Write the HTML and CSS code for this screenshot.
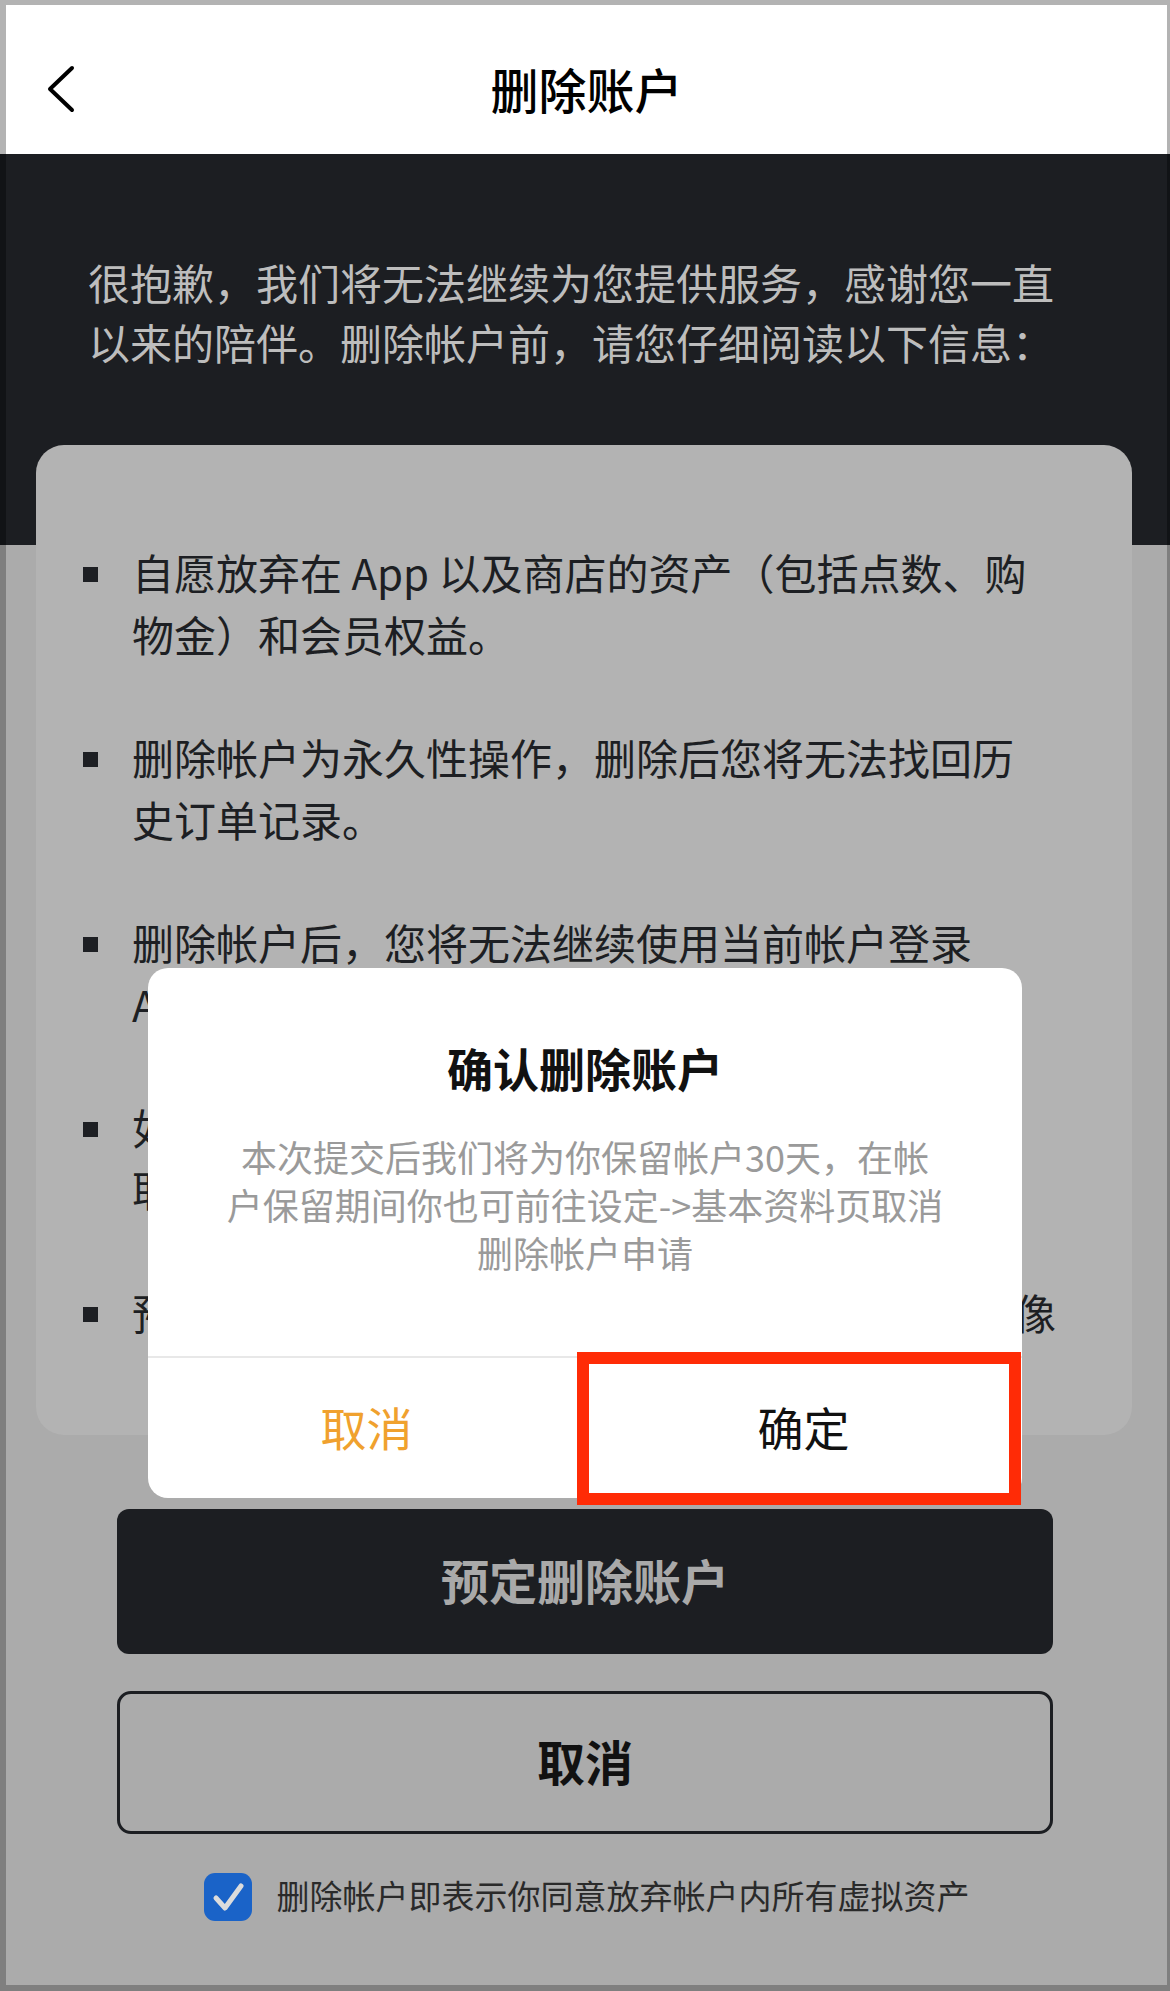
FILE: index.html
```html
<!DOCTYPE html>
<html lang="zh-CN">
<head>
    <meta charset="UTF-8">
    <meta name="viewport" content="width=device-width, initial-scale=1.0">
    <title>删除账户</title>
    <link rel="stylesheet" href="styles.css">
</head>
<body>
    <div class="screen">

        <!-- Top bar -->
        <header class="topbar">
            <svg class="back-icon" width="28" height="48" viewBox="0 0 28 48">
                <path d="M25 3 L3 24 L25 45" fill="none" stroke="#000" stroke-width="4" stroke-linecap="round" stroke-linejoin="round"/>
            </svg>
            <h1>删除账户</h1>
            <span></span>
        </header>

        <!-- Intro -->
        <section class="hero">
            <p class="intro">很抱歉，我们将无法继续为您提供服务，感谢您一直<br>以来的陪伴。删除帐户前，请您仔细阅读以下信息：</p>
        </section>

        <main class="lower">
            <!-- Notice list -->
            <ul class="notice-card">
                <li><span class="dot"></span><p>自愿放弃在 App 以及商店的资产（包括点数、购<br>物金）和会员权益。</p></li>
                <li><span class="dot"></span><p>删除帐户为永久性操作，删除后您将无法找回历<br>史订单记录。</p></li>
                <li><span class="dot"></span><p>删除帐户后，您将无法继续使用当前帐户登录<br>App 以及商店。</p></li>
                <li><span class="dot"></span><p>如需再次使用，请重新注册帐户，已删除的数据<br>取消后亦无法恢复。</p></li>
                <li><span class="dot"></span><p>预定删除帐户后，我们将清除您的个人资料及头像</p></li>
            </ul>

            <div class="actions">
                <button class="btn-primary">预定删除账户</button>
                <button class="btn-outline">取消</button>
            </div>

            <label class="agree">
                <span class="checkbox">
                    <svg width="48" height="48" viewBox="0 0 48 48">
                        <path d="M12 25 L21 35 L37 13" fill="none" stroke="#dcdcdc" stroke-width="5" stroke-linecap="round" stroke-linejoin="round"/>
                    </svg>
                </span>
                <span class="agree-text">删除帐户即表示你同意放弃帐户内所有虚拟资产</span>
            </label>
        </main>

        <!-- Confirm dialog -->
        <div class="dialog">
            <div class="dialog-body">
                <h2>确认删除账户</h2>
                <p>本次提交后我们将为你保留帐户30天，在帐<br>户保留期间你也可前往设定-&gt;基本资料页取消<br>删除帐户申请</p>
            </div>
            <div class="dialog-actions">
                <button class="dialog-cancel">取消</button>
                <button class="dialog-ok">确定</button>
            </div>
            <div class="highlight"></div>
        </div>

    </div>
</body>
</html>
```

FILE: styles.css
```css
/* base */
* {
    box-sizing: border-box;
}

body {
    margin: 0;
    font-family: "Noto Sans CJK SC", "Noto Sans", sans-serif;
    background-color: #7f7f7f;
}

.screen {
    position: relative;
    width: 1170px;
    height: 1991px;
}

/* Top bar */
.topbar {
    height: 154px;
    padding-top: 16px;
    background-color: #fff;
    border-top: 5px solid #b3b3b3;
    border-left: 6px solid #b3b3b3;
    border-right: 3px solid #b3b3b3;
    display: grid;
    grid-template-columns: 1fr auto 1fr;
    align-items: center;
}

.back-icon {
    margin-left: 41px;
    margin-top: 2px;
}

.topbar h1 {
    margin: 0;
    font-size: 48px;
    font-weight: 500;
    color: #000;
    line-height: 60px;
}

/* Intro */
.hero {
    height: 391px;
    padding: 98px 40px 0 82px;
    background-color: #1c1e22;
    border-left: 6px solid #111316;
    border-right: 3px solid #111316;
}

.intro {
    margin: 0;
    font-size: 42px;
    line-height: 60px;
    color: #bdbdbd;
    white-space: nowrap;
}

/* Lower area */
.lower {
    display: flow-root;
    background-color: #ababab;
    border-left: 6px solid #7f7f7f;
    border-right: 3px solid #7f7f7f;
    border-bottom: 6px solid #7f7f7f;
    padding-bottom: 64px;
}

.notice-card {
    list-style: none;
    margin: -100px 35px 0 30px;
    padding: 96px 40px 92px 47px;
    background-color: #b3b3b3;
    border-radius: 28px;
    position: relative;
}

.notice-card li {
    display: flex;
    gap: 34px;
    margin-bottom: 61px;
}

.notice-card li:last-child {
    margin-bottom: 0;
}

.dot {
    flex: none;
    width: 15px;
    height: 15px;
    margin-top: 26px;
    background-color: #1d1f23;
}

.notice-card p {
    margin: 0;
    font-size: 42px;
    line-height: 62px;
    color: #1d1f23;
    white-space: nowrap;
}

/* Buttons */
.actions {
    margin: 74px 114px 0 111px;
    display: flex;
    flex-direction: column;
    gap: 37px;
}

.btn-primary,
.btn-outline {
    display: block;
    width: 100%;
    padding-bottom: 6px;
    font-family: inherit;
    font-size: 48px;
    font-weight: 700;
    cursor: pointer;
}

.btn-primary {
    height: 145px;
    background-color: #1c1e22;
    color: #a9a9a9;
    border: none;
    border-radius: 12px;
}

.btn-outline {
    height: 143px;
    background-color: transparent;
    color: #111;
    border: 3px solid #1c1e22;
    border-radius: 14px;
}

/* Agreement */
.agree {
    margin-top: 39px;
    display: flex;
    justify-content: center;
    align-items: center;
    gap: 25px;
    font-size: 33px;
    color: #2a2a2a;
}

.agree-text {
    margin-top: -4px;
}

.checkbox {
    width: 48px;
    height: 48px;
    border-radius: 11px;
    background-color: #1a63c8;
    display: block;
}

.checkbox svg {
    display: block;
}

/* Dialog */
.dialog {
    position: absolute;
    left: 148px;
    top: 968px;
    width: 874px;
    height: 530px;
    background-color: #fff;
    border-radius: 20px;
}

.dialog-body {
    height: 388px;
    padding-top: 69px;
    text-align: center;
}

.dialog-body h2 {
    margin: 0;
    font-size: 46px;
    font-weight: 700;
    line-height: 60px;
    color: #111;
}

.dialog-body p {
    margin: 35px 0 0;
    font-size: 36px;
    line-height: 48px;
    color: #9a9a9a;
}

.dialog-actions {
    height: 142px;
    border-top: 2px solid #e8e8e8;
    display: grid;
    grid-template-columns: 1fr 1fr;
}

.dialog-actions button {
    background: none;
    border: none;
    padding-bottom: 6px;
    font-family: inherit;
    font-size: 46px;
    cursor: pointer;
}

.dialog-cancel {
    color: #f0a12e;
}

.dialog-ok {
    color: #111;
}

.highlight {
    position: absolute;
    left: 429px;
    top: 384px;
    width: 444px;
    height: 153px;
    border: 12px solid #ff2b06;
    pointer-events: none;
}
```
